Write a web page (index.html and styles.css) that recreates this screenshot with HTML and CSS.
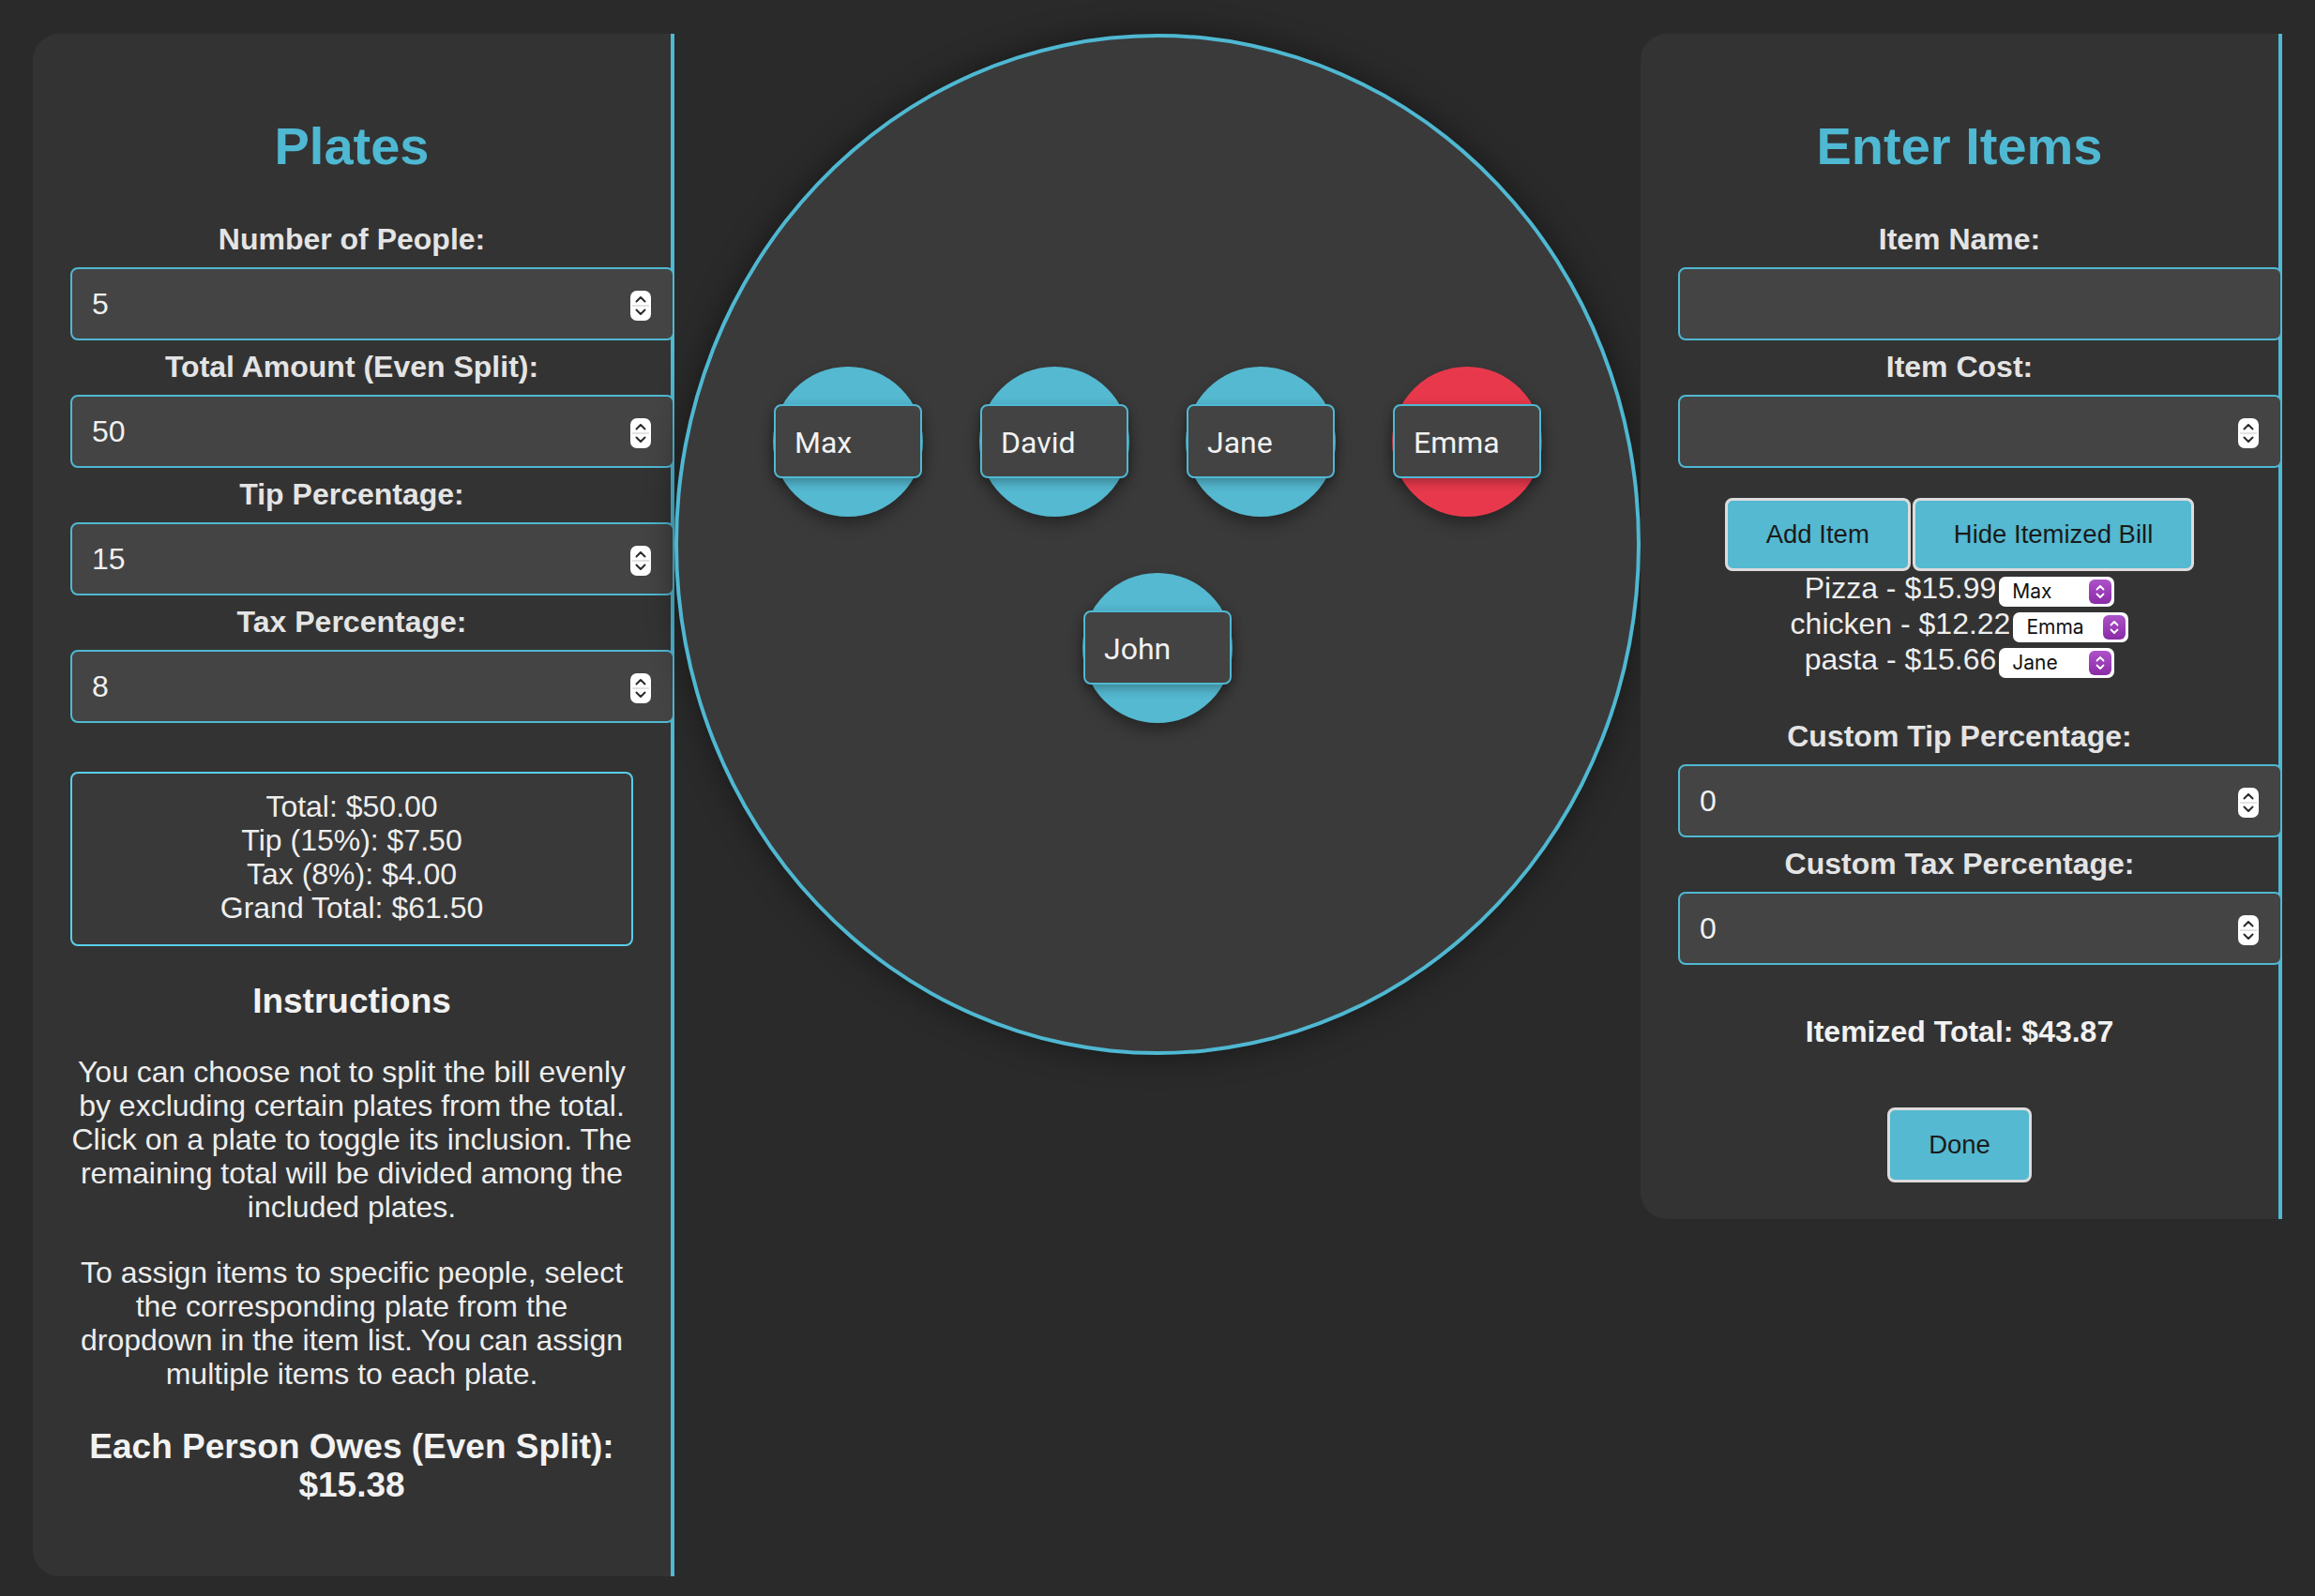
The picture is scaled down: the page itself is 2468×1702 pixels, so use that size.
FILE: index.html
```html
<!DOCTYPE html>
<html lang="en">
<head>
<meta charset="utf-8">
<title>Bill Splitter</title>
<link rel="stylesheet" href="styles.css">
</head>
<body>
<div class="app">
  <section class="panel panel-left">
    <h2 class="title">Plates</h2>
    <label class="lbl">Number of People:</label>
    <div class="field"><input type="text" value="5"><svg class="spin" width="22" height="32" viewBox="0 0 22 32"><rect x="0" y="0" width="22" height="32" rx="7" fill="#fff"/><line x1="2" y1="16" x2="20" y2="16" stroke="#c8c8c8" stroke-width="1"/><path d="M6.5 11.5 L11 7 L15.5 11.5" fill="none" stroke="#2b2b2b" stroke-width="2" stroke-linecap="round" stroke-linejoin="round"/><path d="M6.5 20.5 L11 25 L15.5 20.5" fill="none" stroke="#2b2b2b" stroke-width="2" stroke-linecap="round" stroke-linejoin="round"/></svg></div>
    <label class="lbl">Total Amount (Even Split):</label>
    <div class="field"><input type="text" value="50"><svg class="spin" width="22" height="32" viewBox="0 0 22 32"><rect x="0" y="0" width="22" height="32" rx="7" fill="#fff"/><line x1="2" y1="16" x2="20" y2="16" stroke="#c8c8c8" stroke-width="1"/><path d="M6.5 11.5 L11 7 L15.5 11.5" fill="none" stroke="#2b2b2b" stroke-width="2" stroke-linecap="round" stroke-linejoin="round"/><path d="M6.5 20.5 L11 25 L15.5 20.5" fill="none" stroke="#2b2b2b" stroke-width="2" stroke-linecap="round" stroke-linejoin="round"/></svg></div>
    <label class="lbl">Tip Percentage:</label>
    <div class="field"><input type="text" value="15"><svg class="spin" width="22" height="32" viewBox="0 0 22 32"><rect x="0" y="0" width="22" height="32" rx="7" fill="#fff"/><line x1="2" y1="16" x2="20" y2="16" stroke="#c8c8c8" stroke-width="1"/><path d="M6.5 11.5 L11 7 L15.5 11.5" fill="none" stroke="#2b2b2b" stroke-width="2" stroke-linecap="round" stroke-linejoin="round"/><path d="M6.5 20.5 L11 25 L15.5 20.5" fill="none" stroke="#2b2b2b" stroke-width="2" stroke-linecap="round" stroke-linejoin="round"/></svg></div>
    <label class="lbl">Tax Percentage:</label>
    <div class="field"><input type="text" value="8"><svg class="spin" width="22" height="32" viewBox="0 0 22 32"><rect x="0" y="0" width="22" height="32" rx="7" fill="#fff"/><line x1="2" y1="16" x2="20" y2="16" stroke="#c8c8c8" stroke-width="1"/><path d="M6.5 11.5 L11 7 L15.5 11.5" fill="none" stroke="#2b2b2b" stroke-width="2" stroke-linecap="round" stroke-linejoin="round"/><path d="M6.5 20.5 L11 25 L15.5 20.5" fill="none" stroke="#2b2b2b" stroke-width="2" stroke-linecap="round" stroke-linejoin="round"/></svg></div>

    <div class="summary">
      <div>Total: $50.00</div>
      <div>Tip (15%): $7.50</div>
      <div>Tax (8%): $4.00</div>
      <div>Grand Total: $61.50</div>
    </div>

    <h3 class="instr-title">Instructions</h3>
    <p class="p1">You can choose not to split the bill evenly by excluding certain plates from the total. Click on a plate to toggle its inclusion. The remaining total will be divided among the included plates.</p>
    <p class="p2">To assign items to specific people, select the corresponding plate from the dropdown in the item list. You can assign multiple items to each plate.</p>
    <h3 class="owes">Each Person Owes (Even Split):<br>$15.38</h3>
  </section>

  <main class="center">
    <div class="table">
      <div class="plate"><input class="plate-name" type="text" value="Max"></div>
      <div class="plate"><input class="plate-name" type="text" value="David"></div>
      <div class="plate"><input class="plate-name" type="text" value="Jane"></div>
      <div class="plate plate-off"><input class="plate-name" type="text" value="Emma"></div>
      <div class="plate"><input class="plate-name" type="text" value="John"></div>
    </div>
  </main>

  <section class="panel panel-right">
    <h2 class="title">Enter Items</h2>
    <label class="lbl">Item Name:</label>
    <div class="field"><input type="text" value=""></div>
    <label class="lbl">Item Cost:</label>
    <div class="field"><input type="text" value=""><svg class="spin" width="22" height="32" viewBox="0 0 22 32"><rect x="0" y="0" width="22" height="32" rx="7" fill="#fff"/><line x1="2" y1="16" x2="20" y2="16" stroke="#c8c8c8" stroke-width="1"/><path d="M6.5 11.5 L11 7 L15.5 11.5" fill="none" stroke="#2b2b2b" stroke-width="2" stroke-linecap="round" stroke-linejoin="round"/><path d="M6.5 20.5 L11 25 L15.5 20.5" fill="none" stroke="#2b2b2b" stroke-width="2" stroke-linecap="round" stroke-linejoin="round"/></svg></div>

    <div class="buttons">
      <button class="btn btn-add">Add Item</button>
      <button class="btn btn-hide">Hide Itemized Bill</button>
    </div>

    <div class="items">
      <div class="item">Pizza - $15.99<span class="assign"><span class="assign-text">Max</span><svg class="step" width="24" height="26" viewBox="0 0 24 26"><defs><linearGradient id="pg1" x1="0" y1="0" x2="0" y2="1"><stop offset="0" stop-color="#ad52c9"/><stop offset="1" stop-color="#8a2ba6"/></linearGradient></defs><rect width="24" height="26" rx="6" fill="url(#pg1)"/><path d="M8.5 10.5 L12 7 L15.5 10.5" fill="none" stroke="#fff" stroke-width="1.8" stroke-linecap="round" stroke-linejoin="round"/><path d="M8.5 15.5 L12 19 L15.5 15.5" fill="none" stroke="#fff" stroke-width="1.8" stroke-linecap="round" stroke-linejoin="round"/></svg></span></div>
      <div class="item">chicken - $12.22<span class="assign"><span class="assign-text">Emma</span><svg class="step" width="24" height="26" viewBox="0 0 24 26"><rect width="24" height="26" rx="6" fill="url(#pg1)"/><path d="M8.5 10.5 L12 7 L15.5 10.5" fill="none" stroke="#fff" stroke-width="1.8" stroke-linecap="round" stroke-linejoin="round"/><path d="M8.5 15.5 L12 19 L15.5 15.5" fill="none" stroke="#fff" stroke-width="1.8" stroke-linecap="round" stroke-linejoin="round"/></svg></span></div>
      <div class="item">pasta - $15.66<span class="assign"><span class="assign-text">Jane</span><svg class="step" width="24" height="26" viewBox="0 0 24 26"><rect width="24" height="26" rx="6" fill="url(#pg1)"/><path d="M8.5 10.5 L12 7 L15.5 10.5" fill="none" stroke="#fff" stroke-width="1.8" stroke-linecap="round" stroke-linejoin="round"/><path d="M8.5 15.5 L12 19 L15.5 15.5" fill="none" stroke="#fff" stroke-width="1.8" stroke-linecap="round" stroke-linejoin="round"/></svg></span></div>
    </div>

    <label class="lbl">Custom Tip Percentage:</label>
    <div class="field"><input type="text" value="0"><svg class="spin" width="22" height="32" viewBox="0 0 22 32"><rect x="0" y="0" width="22" height="32" rx="7" fill="#fff"/><line x1="2" y1="16" x2="20" y2="16" stroke="#c8c8c8" stroke-width="1"/><path d="M6.5 11.5 L11 7 L15.5 11.5" fill="none" stroke="#2b2b2b" stroke-width="2" stroke-linecap="round" stroke-linejoin="round"/><path d="M6.5 20.5 L11 25 L15.5 20.5" fill="none" stroke="#2b2b2b" stroke-width="2" stroke-linecap="round" stroke-linejoin="round"/></svg></div>
    <label class="lbl">Custom Tax Percentage:</label>
    <div class="field"><input type="text" value="0"><svg class="spin" width="22" height="32" viewBox="0 0 22 32"><rect x="0" y="0" width="22" height="32" rx="7" fill="#fff"/><line x1="2" y1="16" x2="20" y2="16" stroke="#c8c8c8" stroke-width="1"/><path d="M6.5 11.5 L11 7 L15.5 11.5" fill="none" stroke="#2b2b2b" stroke-width="2" stroke-linecap="round" stroke-linejoin="round"/><path d="M6.5 20.5 L11 25 L15.5 20.5" fill="none" stroke="#2b2b2b" stroke-width="2" stroke-linecap="round" stroke-linejoin="round"/></svg></div>

    <div class="itemized">Itemized Total: $43.87</div>
    <div class="buttons done-row">
      <button class="btn btn-done">Done</button>
    </div>
  </section>
</div>
</body>
</html>
```
FILE: styles.css
```css
* {
  box-sizing: border-box;
}

html,
body {
  margin: 0;
  padding: 0;
}

body {
  background: #2a2a2a;
  font-family: "Liberation Sans", Arial, Helvetica, sans-serif;
  font-size: 32px;
  line-height: 36px;
  color: #ededed;
}

.app {
  display: flex;
  align-items: flex-start;
  width: 2468px;
  min-height: 1702px;
  padding: 36px 35px;
}

/* side panels */
.panel {
  flex: none;
  width: 684px;
  background: #333333;
  border-right: 4px solid #4fb8d2;
  border-radius: 28px 0 0 28px;
  padding: 40px 40px 40px 40px;
  text-align: center;
}

.panel-right {
  padding-bottom: 39px;
}

.title {
  font-size: 56px;
  line-height: 64px;
  font-weight: bold;
  color: #4fb8d2;
  margin: 48px 0 49px;
}

.lbl {
  display: block;
  font-weight: bold;
  color: #e4e4e4;
  margin: 10px 0 12px;
}

.field {
  display: flex;
  align-items: center;
  height: 78px;
  margin-right: -44px;
  padding: 0 20px;
  background: #444444;
  border: 2px solid #4fb8d2;
  border-radius: 8px;
}

.field input {
  flex: 1;
  min-width: 0;
  height: 100%;
  padding: 0 0 0 1px;
  border: none;
  outline: none;
  background: transparent;
  color: #f0f0f0;
  font-family: "Liberation Sans", Arial, sans-serif;
  font-size: 32px;
}

.spin {
  flex: none;
  margin-right: 3px;
  margin-top: 3px;
}

.summary {
  margin-top: 52px;
  padding: 17px 0 21px;
  background: #393939;
  border: 2px solid #58cfe8;
  border-radius: 8px;
  color: #eeeeee;
}

.instr-title {
  font-size: 37px;
  line-height: 42px;
  font-weight: bold;
  margin: 38px 0 0;
  color: #f2f2f2;
}

.p1 {
  margin: 36px 0 0;
}

.p2 {
  margin: 34px 0 0;
}

.owes {
  font-size: 37px;
  line-height: 41px;
  font-weight: bold;
  margin: 39px 0 37px;
  color: #f2f2f2;
}

/* center table */
.center {
  flex: 1;
  min-width: 0;
}

.table {
  height: 1089px;
  background: #3a3a3a;
  border: 4px solid #4fb8d2;
  border-radius: 50%;
  box-shadow: 0 0 34px rgba(0, 0, 0, 0.45);
  display: flex;
  flex-wrap: wrap;
  justify-content: center;
  align-content: center;
  align-items: center;
}

.plate {
  width: 160px;
  height: 160px;
  margin: 30px;
  border-radius: 50%;
  background: #54b9d1;
  box-shadow: 0 8px 16px rgba(0, 0, 0, 0.35);
  display: flex;
  align-items: center;
  justify-content: center;
}

.plate-off {
  background: #e8394c;
}

.plate-name {
  flex: none;
  width: 158px;
  height: 79px;
  padding: 3px 0 0 20px;
  background: #434343;
  border: 2px solid #4fb8d2;
  border-radius: 8px;
  color: #f2f2f2;
  font-family: Roboto, "Noto Sans", sans-serif;
  font-size: 32px;
  outline: none;
  box-shadow: 0 4px 12px rgba(0, 0, 0, 0.3);
}

/* right panel pieces */
.buttons {
  display: flex;
  justify-content: center;
  gap: 2px;
  margin-top: 32px;
}

.btn {
  height: 78px;
  padding: 0 41px;
  background: #54b9d1;
  border: 3px solid #dcdcdc;
  border-radius: 8px;
  color: #1b1b1b;
  font-family: "Liberation Sans", Arial, sans-serif;
  font-size: 27.5px;
}

.items {
  margin: 0 0 44px;
}

.item {
  line-height: 36px;
  color: #eeeeee;
}

.assign {
  display: inline-flex;
  align-items: center;
  width: 123px;
  height: 32px;
  margin-left: 3px;
  padding: 0 3px 0 14px;
  background: #ffffff;
  border-radius: 7px;
  vertical-align: baseline;
  text-align: left;
}

.assign-text {
  flex: 1;
  font-family: Inter, Roboto, sans-serif;
  font-size: 21px;
  line-height: 26px;
  color: #111111;
}

.step {
  flex: none;
}

.itemized {
  font-weight: bold;
  margin-top: 53px;
  color: #f2f2f2;
}

.done-row {
  margin-top: 63px;
}

.btn-done {
  height: 80px;
  padding: 0 41px;
}
```
